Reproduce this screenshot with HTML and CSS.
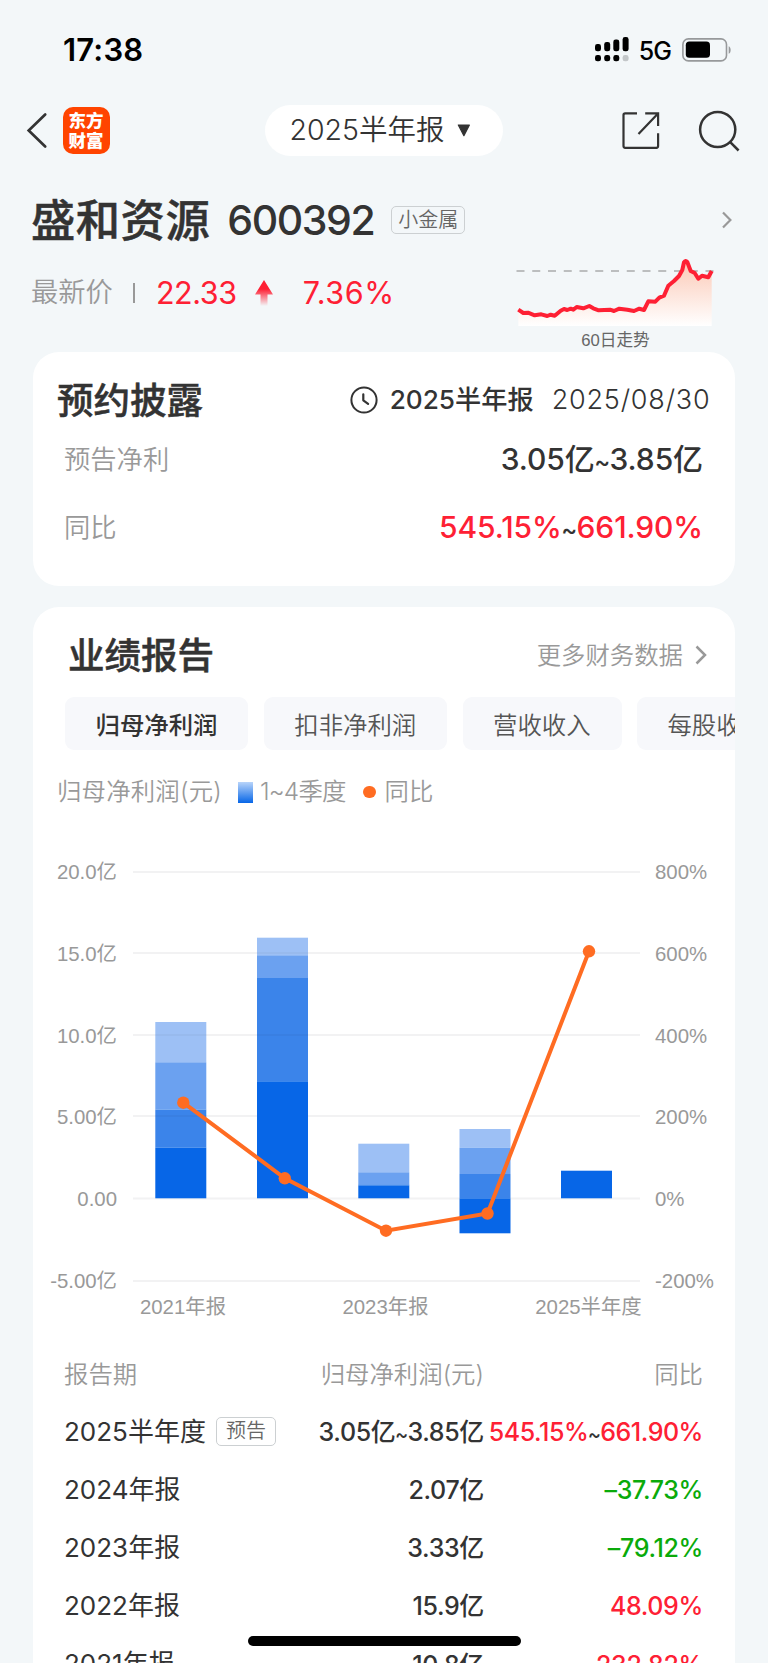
FILE: index.html
```html
<!DOCTYPE html>
<html lang="zh-CN">
<head>
<meta charset="utf-8">
<title>业绩报告</title>
<link rel="stylesheet" href="styles.css">
</head>
<body>
<div class="screen">
  <header class="status">
    <span class="clock-time">17:38</span>
    <div class="status-right">
      <svg class="signal" width="34" height="25" viewBox="0 0 34 25">
        <rect x="0" y="7" width="6" height="7.3" rx="2.4"/><rect x="9.2" y="5" width="6" height="9.3" rx="2.4"/><rect x="18.3" y="2.6" width="6" height="11.7" rx="2.4"/><rect x="27.6" y="0" width="6" height="14.3" rx="2.4"/>
        <rect x="0" y="18" width="6" height="6.3" rx="2.4"/><rect x="9.2" y="18" width="6" height="6.3" rx="2.4"/><rect x="18.3" y="18" width="6" height="6.3" rx="2.4"/><rect x="27.6" y="18" width="6" height="6.3" rx="2.4" fill="#c3c7c9"/>
      </svg>
      <span class="network">5G</span>
      <svg class="battery" width="50" height="24" viewBox="0 0 50 24">
        <rect x=".9" y=".9" width="43.6" height="22" rx="5.5" fill="none" stroke="#97999b" stroke-width="1.6"/>
        <rect x="3.8" y="3.6" width="24.2" height="16.2" rx="3.6"/>
        <path d="M46.7 8.2c2.6 1 2.6 6.6 0 7.6z" fill="#97999b"/>
      </svg>
    </div>
  </header>

  <nav class="nav">
    <svg class="back" width="22" height="37" viewBox="0 0 22 37"><path d="M19.2 2.5 2.700 18.5l16.500 16" fill="none" stroke="#333" stroke-width="2.7" stroke-linecap="round"/></svg>
    <div class="logo"><span>东方</span><span>财富</span></div>
    <div class="period"><span>2025半年报</span><svg width="14" height="13" viewBox="0 0 14 13"><path d="M1.3 1h11.1L6.9 11.6z" fill="#333" stroke="#333" stroke-width="1.2" stroke-linejoin="round"/></svg></div>
    <svg class="share" width="40" height="40" viewBox="0 0 40 40" fill="none" stroke="#333" stroke-width="2.2"><path d="M16 2.4H4.2q-1.7 0-1.7 1.7v31q0 1.7 1.7 1.7h31.2q1.7 0 1.7-1.7V22.2M24.2 2.4h12.9V15M36.8 2.8 17.5 23"/></svg>
    <svg class="search" width="42" height="42" viewBox="0 0 42 42" fill="none" stroke="#333" stroke-width="2.5"><circle cx="19.7" cy="19.5" r="17.6"/><path d="m32.2 32.2 8.4 8.3"/></svg>
  </nav>

  <section class="stock">
    <div class="stock-head">
      <h1 class="stock-name">盛和资源</h1>
      <span class="stock-code">600392</span>
      <span class="tag">小金属</span>
      <svg class="stock-more" width="12" height="20" viewBox="0 0 12 20"><path d="m2 2.5 7.4 7.5L2 17.5" fill="none" stroke="#999" stroke-width="2.2"/></svg>
    </div>
    <div class="stock-body">
      <div class="price">
        <span class="price-label">最新价</span>
        <i class="divider"></i>
        <span class="price-num">22.33</span>
        <svg class="up" width="20" height="26" viewBox="0 0 20 26"><defs><linearGradient id="upg" x1="0" y1="0" x2="0" y2="1"><stop offset=".35" stop-color="#fe2034"/><stop offset="1" stop-color="#fe2034" stop-opacity="0"/></linearGradient></defs><path d="M10 0 19 14.5h-5.5V26h-7V14.5H1z" fill="url(#upg)"/></svg>
        <span class="price-num price-rate">7.36%</span>
      </div>
      <div class="trend">
        <svg width="210" height="79" viewBox="510 251 210 79">
          <defs><linearGradient id="tg" x1="0" y1="0" x2="0" y2="1"><stop offset="0" stop-color="#fbc9b6"/><stop offset="1" stop-color="#fff"/></linearGradient></defs>
          <path fill="url(#tg)" d="M518.3 309.7 523.3 313 528 312.7 534.7 315.3 541.3 314.3 547.3 316 554.7 315.7 560.7 310.7 564 309 576.7 307 583.3 308.3 589.3 306 598.7 310.3 610 309.7 619.3 308.7 634 311 644 310 648.3 301.3 655.3 301.7 664 295.7 668.3 285.7 674 281 679 276 682.3 270 684 261.3 687.3 261 690.7 271 694.7 273 698.3 278.7 702 275.7 708.3 277.3 711.7 271V326H518.3z"/>
          <path d="M516.5 271H714" stroke="#bcbebf" stroke-width="2" stroke-dasharray="8 7.75" fill="none"/>
          <path fill="none" stroke="#fe2034" stroke-width="4" stroke-linejoin="round" d="M518.3 309.7 523.3 313 528 312.7 534.7 315.3 541.3 314.3 547.3 316 550.7 314.7 554.7 315.7 560.7 310.7 564 309 567.3 310 570.7 308.7 573.3 309.7 576.7 307 583.3 308.3 589.3 306 593.3 308.3 598.7 310.3 610 309.7 614 311 619.3 308.7 627.3 309.7 634 311 639.3 308.7 644 310 648.3 301.3 655.3 301.7 659.3 297.7 664 295.7 668.3 285.7 674 281 679 276 682.3 270 684 262.3Q685.5 259.800 687.3 262L690.7 271 694.7 273 698.3 278.7 702 275.7 708.3 277.3 711.7 271"/>
        </svg>
        <span class="trend-label">60日走势</span>
      </div>
    </div>
  </section>

  <section class="card disclose">
    <div class="disclose-head">
      <h2>预约披露</h2>
      <svg class="clock" width="28" height="28" viewBox="0 0 28 28" fill="none" stroke="#333"><circle cx="14" cy="14" r="12.600" stroke-width="2"/><path d="M13.3 8.300v6l4.800 3.500" stroke-width="2.2" stroke-linecap="round" stroke-linejoin="round"/></svg>
      <span class="disclose-period">2025半年报</span>
      <span class="disclose-date">2025/08/30</span>
    </div>
    <div class="kv"><span class="k">预告净利</span><span class="v">3.05亿<i class="to">~</i>3.85亿</span></div>
    <div class="kv"><span class="k">同比</span><span class="v v-pct"><b class="red">545.15%</b><i class="to">~</i><b class="red">661.90%</b></span></div>
  </section>

  <section class="card report">
    <div class="report-head">
      <h2>业绩报告</h2>
      <span class="more">更多财务数据</span>
      <svg width="14" height="20" viewBox="0 0 14 20"><path d="m2.500 1.500 8.500 8.500-8.500 8.500" fill="none" stroke="#999" stroke-width="2.500"/></svg>
    </div>
    <div class="tabs"><span class="tab active">归母净利润</span><span class="tab">扣非净利润</span><span class="tab">营收收入</span><span class="tab">每股收益</span></div>
    <div class="legend"><span class="legend-title">归母净利润(元)</span><i class="swatch"></i><span class="legend-q">1~4季度</span><i class="dot"></i><span>同比</span></div>

    <svg class="chart" width="702" height="490" viewBox="33 840 702 490">
      <g stroke="#f2f2f3" stroke-width="2"><path d="M133 872H640M133 953H640M133 1035H640M133 1116H640M133 1198.500H640M133 1281H640"/></g>
      <g fill="#9dc0f5"><rect x="155.300" y="1022" width="51" height="40.300"/><rect x="257" y="937.700" width="51" height="17.600"/><rect x="358.300" y="1143.700" width="51" height="28.600"/><rect x="459.500" y="1129" width="51" height="18.700"/></g>
      <g fill="#6ba1f0"><rect x="155.300" y="1062.300" width="51" height="47.400"/><rect x="257" y="955.300" width="51" height="22.700"/><rect x="358.300" y="1172.300" width="51" height="12"/><rect x="459.500" y="1147.700" width="51" height="26.300"/></g>
      <g fill="#3b84ea"><rect x="155.300" y="1109.700" width="51" height="38"/><rect x="257" y="978" width="51" height="103.300"/><rect x="358.300" y="1184.300" width="51" height="1.500"/><rect x="459.500" y="1174" width="51" height="24.300"/></g>
      <g fill="#0766e7"><rect x="155.300" y="1147.700" width="51" height="50.600"/><rect x="257" y="1081.300" width="51" height="117"/><rect x="358.300" y="1185.700" width="51" height="12.600"/><rect x="459.500" y="1198.300" width="51" height="35"/><rect x="561" y="1170.700" width="51" height="27.600"/></g>
      <g stroke="#000" stroke-opacity=".03" stroke-width="2"><path d="M155.300 1035h51M155.300 1116h51M257 953h51M257 1035h51"/></g>
      <path d="M183.300 1102.700 284.800 1178.300 386 1230.700 487.500 1213.500 589 951.300" fill="none" stroke="#ff6c22" stroke-width="4"/>
      <g fill="#ff6c22"><circle cx="183.300" cy="1102.700" r="6.200"/><circle cx="284.800" cy="1178.300" r="6.200"/><circle cx="386" cy="1230.700" r="6.200"/><circle cx="487.500" cy="1213.500" r="6.200"/><circle cx="589" cy="951.300" r="6.200"/></g>
      <g class="axis" text-anchor="end"><text x="117" y="879">20.0亿</text><text x="117" y="961">15.0亿</text><text x="117" y="1042.500">10.0亿</text><text x="117" y="1124">5.00亿</text><text x="117" y="1206">0.00</text><text x="117" y="1288">-5.00亿</text></g>
      <g class="axis"><text x="655" y="879">800%</text><text x="655" y="961">600%</text><text x="655" y="1042.500">400%</text><text x="655" y="1124">200%</text><text x="655" y="1206">0%</text><text x="655" y="1288">-200%</text></g>
      <g class="axis" text-anchor="middle"><text x="183" y="1314">2021年报</text><text x="385.500" y="1314">2023年报</text><text x="588.500" y="1314">2025半年度</text></g>
    </svg>

    <div class="table">
      <div class="row head"><span>报告期</span><span>归母净利润(元)</span><span>同比</span></div>
      <div class="row"><span class="p">2025半年度<em class="tag tag-pre">预告</em></span><span class="n">3.05亿<i class="to">~</i>3.85亿</span><span class="n range"><b class="red">545.15%</b><i class="to">~</i><b class="red">661.90%</b></span></div>
      <div class="row"><span class="p">2024年报</span><span class="n">2.07亿</span><span class="n green">–37.73%</span></div>
      <div class="row"><span class="p">2023年报</span><span class="n">3.33亿</span><span class="n green">–79.12%</span></div>
      <div class="row"><span class="p">2022年报</span><span class="n">15.9亿</span><span class="n red">48.09%</span></div>
      <div class="row"><span class="p">2021年报</span><span class="n">10.8亿</span><span class="n red">232.82%</span></div>
    </div>
  </section>
  <div class="home-bar"></div>
</div>
</body>
</html>
```
FILE: styles.css
```css
* { box-sizing: border-box; }
body { margin: 0; background: #f3f7f9; }
h1, h2 { margin: 0; }
b { font-weight: inherit; }
i, em { font-style: normal; }
svg { display: block; flex: none; }

.screen {
  position: relative;
  width: 768px;
  height: 1663px;
  overflow: hidden;
  background: #f3f7f9;
  color: #333;
  font-family: Inter, "Noto Sans CJK SC", sans-serif;
  line-height: 1.2;
  white-space: nowrap;
}
.red { color: #fe2034; }
.green { color: #0aaa0a; }
.to { margin: 0 -.5px; font-size: .8em; }

.status { height: 94px; padding: 5px 36px 0 63px; display: flex; align-items: center; justify-content: space-between; color: #000; }
.clock-time { font-size: 31px; font-weight: 600; letter-spacing: .2px; }
.status-right { display: flex; align-items: center; }
.network { margin: 2px 11px 0 10px; font-size: 25px; font-weight: 500; letter-spacing: -1px; line-height: 28px; }

.nav { height: 73px; padding: 0 26px; display: flex; align-items: center; }
.logo { width: 47px; height: 47px; margin-left: 14.500px; border-radius: 10px; background: #ff4400; color: #fff; display: flex; flex-direction: column; align-items: center; justify-content: center; font-weight: 900; font-size: 17.5px; line-height: 19.5px; }
.period { margin-left: 155.500px; width: 238px; height: 51px; padding-left: 24.500px; border-radius: 26px; background: #fff; display: flex; align-items: center; gap: 12px; font-size: 28.500px; font-weight: 350; }
.share { margin-left: 117.500px; }
.search { margin-left: 37.500px; }

.stock { height: 184.500px; padding-top: 26px; }
.stock-head { height: 54px; padding: 0 35px 0 31px; display: flex; align-items: center; }
.stock-name { padding-top: 1px; font-size: 44.300px; font-weight: 500; line-height: 54px; letter-spacing: .5px; -webkit-text-stroke: .5px #333; }
.stock-code { margin-left: 17px; font-size: 41px; font-weight: 460; line-height: 54px; letter-spacing: -1.400px; }
.tag { height: 28px; padding: 0 6px; border: 1.500px solid #ccd0d2; border-radius: 5px; color: #666; font-size: 20px; line-height: 26px; font-weight: 350; }
.stock-head .tag { margin-left: 17px; }
.stock-more { margin-left: auto; }
.stock-body { display: flex; justify-content: space-between; padding: 4px 48px 0 31px; }
.price { height: 40px; margin-top: 22px; display: flex; align-items: center; color: #fe2034; }
.price-label { padding-top: 1px; color: #999; font-size: 27.300px; font-weight: 350; }
.divider { width: 2px; height: 20px; margin: 0 21px 0 20px; background: #999; }
.price-num { font-size: 30.500px; font-weight: 400; letter-spacing: -.4px; }
.price-rate { letter-spacing: .6px; }
.up { margin: 0 29px 0 17px; }
.trend { display: flex; flex-direction: column; align-items: center; }
.trend-label { padding: 1px 0 0 1px; font: 400 16.700px/20px "Liberation Sans", "Noto Sans CJK SC", sans-serif; color: #666; }

.card { width: 702px; margin-left: 33px; border-radius: 26px; background: #fff; }
.card h2 { font-size: 36.500px; font-weight: 500; line-height: 50px; padding-top: 2px; -webkit-text-stroke: .5px #333; }
.disclose { height: 234.500px; padding-top: 23px; }
.disclose-head { height: 50px; padding: 0 25px 0 24px; display: flex; align-items: center; }
.clock { margin-left: auto; }
.disclose-period { margin-left: 12px; font-size: 26.200px; font-weight: 500; }
.disclose-date { padding-top: 2px; margin-left: 18px; font-size: 27px; font-weight: 300; letter-spacing: .8px; margin-right: -.5px; }
.kv { height: 68px; padding: 0 32px 0 31px; display: flex; align-items: center; justify-content: space-between; }
.k { padding-top: 2px; font-size: 26.300px; font-weight: 350; color: #999; }
.v { padding-top: 1px; font-size: 30px; font-weight: 530; letter-spacing: -.1px; }

.report { height: 1100px; margin-top: 21px; padding-top: 23px; overflow: hidden; }
.report-head { height: 50px; padding: 0 27px 0 35px; display: flex; align-items: center; }
.more { padding-top: 1px; margin-left: auto; margin-right: 11px; font-size: 24.400px; font-weight: 350; color: #999; }
.tabs { margin-top: 17px; padding-left: 32px; display: flex; gap: 15.300px; overflow: hidden; }
.tab { flex: none; height: 53px; padding: 0 31px 0 30.500px; border-radius: 9px; background: #f7f8fb; font-size: 24.400px; line-height: 56px; font-weight: 350; color: #555; }
.tab.active { font-weight: 500; color: #333; }
.legend { height: 84px; padding-left: 24px; display: flex; align-items: center; font-size: 24.400px; font-weight: 350; color: #999; }
.legend-title { letter-spacing: .2px; }
.legend-q { letter-spacing: -.800px; }
.swatch { width: 15px; height: 21px; margin: 0 7px 0 16px; background: linear-gradient(#b8d4fa, #0766e7); }
.dot { width: 12.500px; height: 12.500px; margin: 0 9px 0 17.500px; border-radius: 50%; background: #ff6c22; }
.chart { margin-top: 6px; }
.axis { font: 400 20.400px "Liberation Sans", "Noto Sans CJK SC", sans-serif; fill: #999; }

.table { padding: 15px 32px 0 31px; }
.row { height: 58.200px; display: grid; grid-template-columns: 1fr 190px 219px; align-items: center; text-align: right; }
.row > :first-child { text-align: left; }
.head { padding-top: 2px; font-size: 24.400px; font-weight: 350; color: #999; }
.p { padding-bottom: 2px; display: flex; align-items: center; font-size: 26px; font-weight: 400; }
.n { padding-bottom: 1px; font-size: 25px; font-weight: 530; letter-spacing: -.350px; }
.range { letter-spacing: -.450px; }
.tag-pre { margin-left: 10px; padding: 0 9px; height: 29px; line-height: 27px; }

.home-bar { position: absolute; left: 247.500px; top: 1636px; width: 273.500px; height: 10px; border-radius: 5px; background: #000; }
```
